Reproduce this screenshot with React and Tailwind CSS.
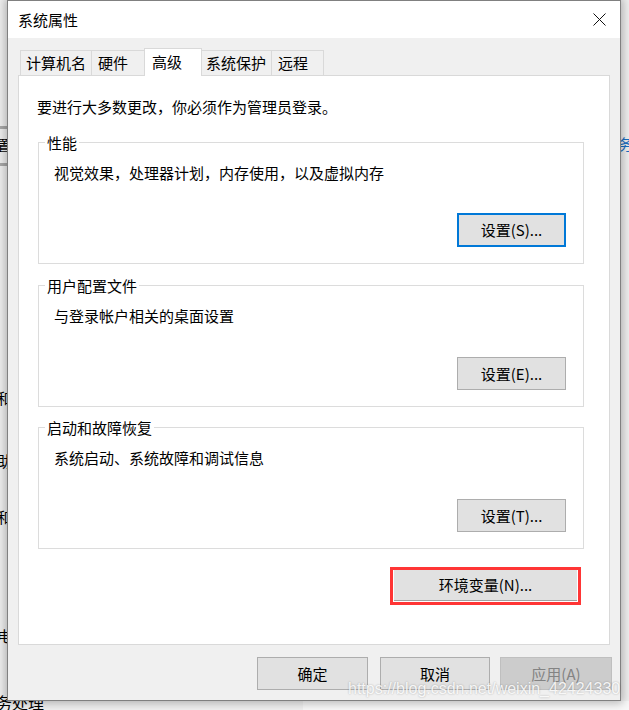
import React from "react";

function Btn({ children, className = "" }) {
  return (
    <div
      className={
        "h-[33px] flex items-center justify-center bg-[#e1e1e1] border border-[#adadad] text-black " +
        className
      }
    >
      {children}
    </div>
  );
}

function Group({ title, text, btn, focused, className = "" }) {
  return (
    <div
      className={
        "relative h-[122px] shrink-0 border border-[#dcdcdc] flex flex-col pt-[20px] pl-[15px] pr-[17px] pb-[16px] " +
        className
      }
    >
      <div className="absolute left-[6px] top-[-10px] bg-white px-[2px]">{title}</div>
      <div>{text}</div>
      {focused ? (
        <div className="mt-auto self-end w-[109px] h-[34px] flex items-center justify-center bg-[#e1e1e1] border-2 border-[#0078d7]">
          {btn}
        </div>
      ) : (
        <Btn className="mt-auto self-end w-[109px]">{btn}</Btn>
      )}
    </div>
  );
}

export default function App() {
  return (
    <div className="relative w-[629px] h-[710px] overflow-hidden bg-[#f0f0f0] font-['Noto_Sans_CJK_SC',sans-serif] text-[15px] leading-[20px] text-black">
      {/* fragments of the window behind */}
      <div className="absolute left-0 top-[126px] w-[8px] h-[3px] bg-[#a9a9a9]" />
      <div className="absolute left-[-3px] top-[135px]">置</div>
      <div className="absolute left-0 top-[163px] w-[8px] h-[3px] bg-[#a9a9a9]" />
      <div className="absolute left-[-3px] top-[388px]">和</div>
      <div className="absolute left-[-3px] top-[451px]">助</div>
      <div className="absolute left-[-3px] top-[507px]">和</div>
      <div className="absolute left-[-3px] top-[626px]">电</div>
      <div className="absolute left-[-4px] top-[692px] text-[16px]">务处理</div>
      <div className="absolute left-[618px] top-[134px] text-[#1a6fc4]">务</div>
      <div className="absolute right-0 bottom-0 w-[326px] h-[9px] bg-[#f8f8f8]" />

      {/* dialog */}
      <div className="absolute left-[7px] top-0 z-10 w-[614px] h-[701px] border border-[#808080] bg-[#f0f0f0] shadow-[0_0_9px_2px_rgba(0,0,0,0.28)] flex flex-col">
        <div className="h-[37px] shrink-0 bg-white flex items-center justify-between pl-[10px] pr-[14px]">
          <span>系统属性</span>
          <svg width="13" height="13" viewBox="0 0 13 13">
            <path d="M0.5 0.5L12.5 12.5M12.5 0.5L0.5 12.5" stroke="#111" strokeWidth="1" />
          </svg>
        </div>

        {/* tabs */}
        <div className="mt-[10px] ml-[12px] flex items-end shrink-0">
          <div className="w-[71px] h-[25px] border-l border-t border-[#d9d9d9] bg-[#f0f0f0] pl-[5px] flex items-center">
            计算机名
          </div>
          <div className="w-[55px] h-[25px] border-l border-t border-[#d9d9d9] bg-[#f0f0f0] pl-[6px] flex items-center">
            硬件
          </div>
          <div className="relative z-10 -mx-[2px] -mb-px w-[58px] h-[28px] border border-b-0 border-[#d9d9d9] bg-white pl-[7px] pt-[3px]">
            高级
          </div>
          <div className="w-[71px] h-[25px] border-l border-t border-[#d9d9d9] bg-[#f0f0f0] pl-[5px] flex items-center">
            系统保护
          </div>
          <div className="w-[53px] h-[25px] border-l border-t border-r border-[#d9d9d9] bg-[#f0f0f0] pl-[6px] flex items-center">
            远程
          </div>
        </div>

        {/* panel */}
        <div className="mx-[10px] h-[570px] shrink-0 border border-[#d9d9d9] bg-white pt-[21px] pl-[19px] pr-[25px] flex flex-col">
          <p className="-ml-px">要进行大多数更改，你必须作为管理员登录。</p>
          <Group
            className="mt-[25px]"
            title="性能"
            text="视觉效果，处理器计划，内存使用，以及虚拟内存"
            btn="设置(S)..."
            focused
          />
          <Group
            className="mt-[21px]"
            title="用户配置文件"
            text="与登录帐户相关的桌面设置"
            btn="设置(E)..."
          />
          <Group
            className="mt-[20px]"
            title="启动和故障恢复"
            text="系统启动、系统故障和调试信息"
            btn="设置(T)..."
          />
          <div className="mt-[18px] self-end mr-[3px] w-[191px] h-[38px] shrink-0 border-[3px] border-[#ff3535] bg-white px-[1px] pb-[1px]">
            <div className="h-full bg-[#e1e1e1] border-b border-[#a0a0a0] flex items-center justify-center">
              环境变量(N)...
            </div>
          </div>
        </div>

        {/* footer */}
        <div className="mt-[12px] mr-[8px] flex justify-end shrink-0">
          <Btn className="w-[111px]">确定</Btn>
          <Btn className="ml-[12px] w-[110px]">取消</Btn>
          <div className="ml-[10px] w-[112px] h-[33px] flex items-center justify-center bg-[#cccccc] border border-[#bfbfbf] text-[#838383]">
            应用(A)
          </div>
        </div>
      </div>

      {/* watermark */}
      <div className="absolute z-20 left-[348px] top-[679px] font-['Liberation_Sans',sans-serif] text-[16px] leading-[20px] text-[rgba(255,255,255,0.88)] [text-shadow:0_0_2px_rgba(0,0,0,0.3)]">
        https://blog.csdn.net/weixin_42424330
      </div>
    </div>
  );
}
